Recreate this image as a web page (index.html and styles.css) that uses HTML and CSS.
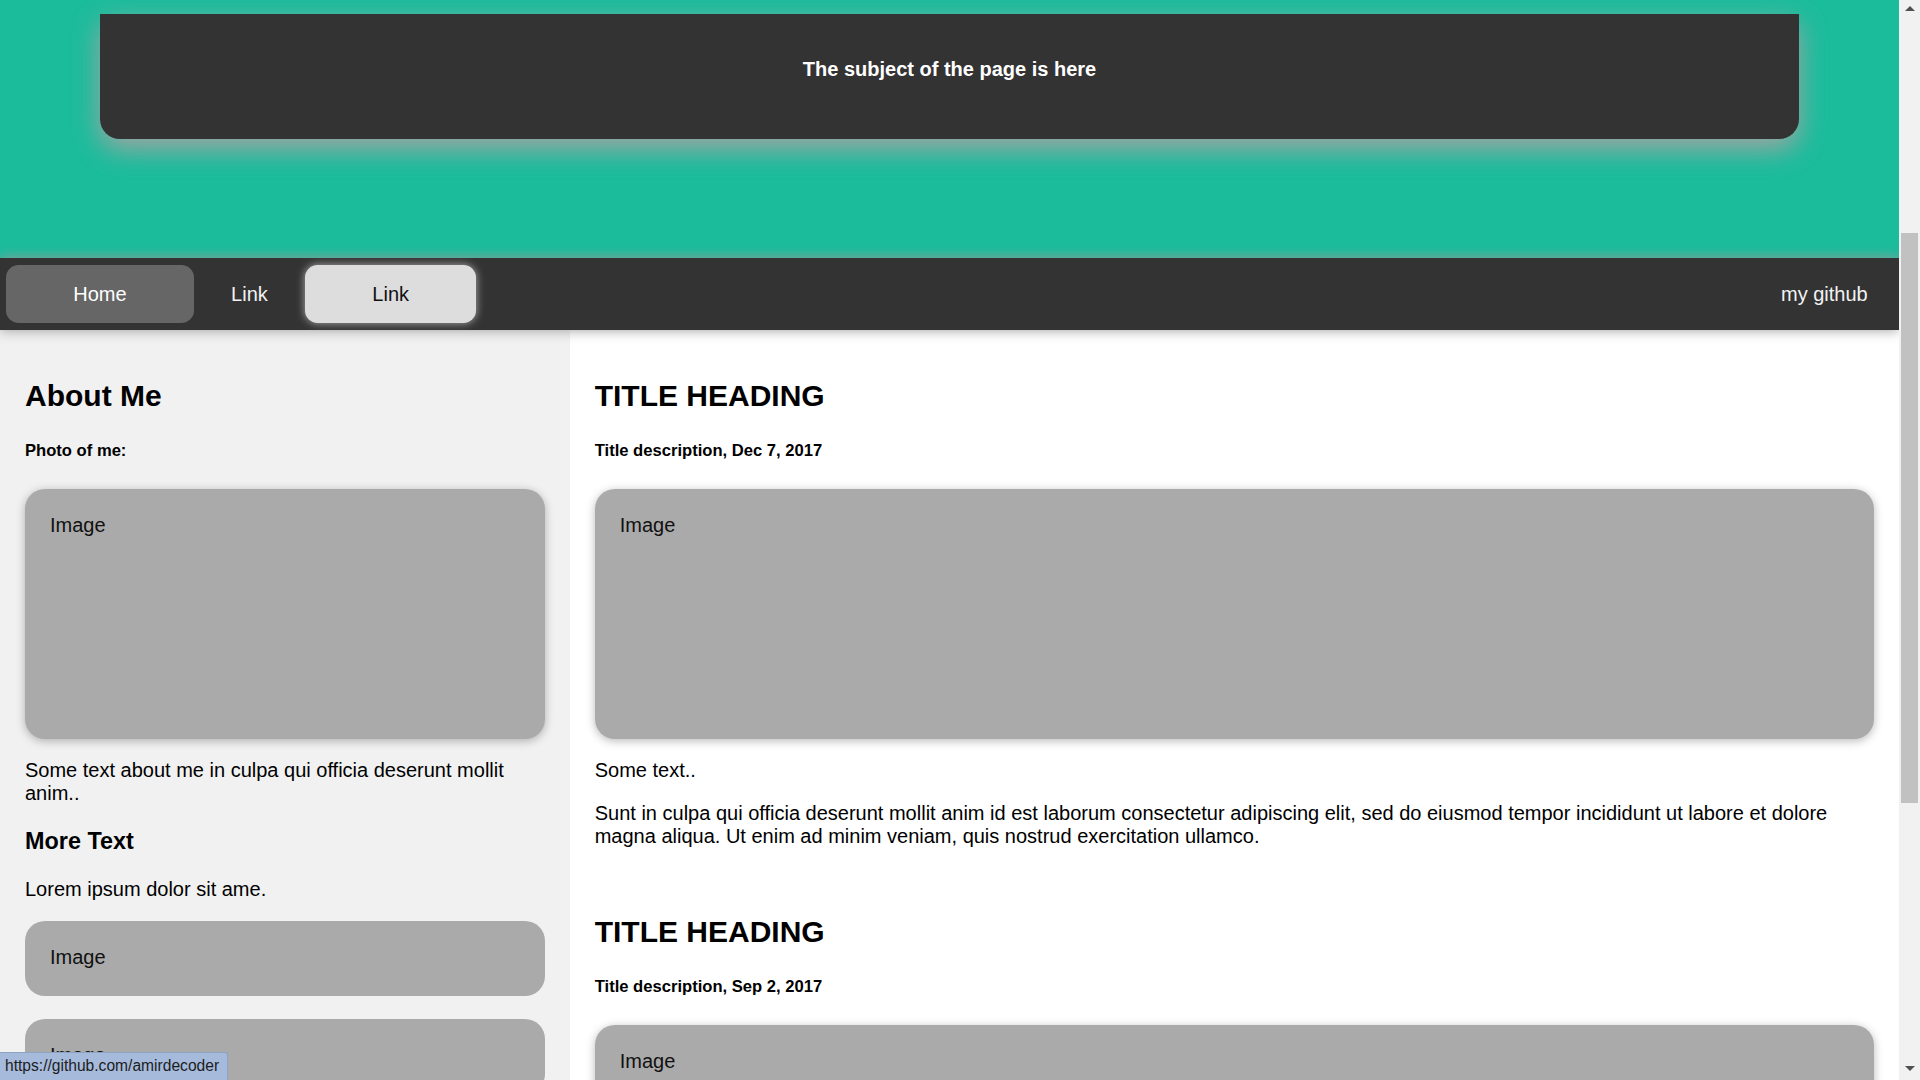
FILE: index.html
```html
<!DOCTYPE html>
<html lang="en">
<head>
<meta charset="utf-8">
<title>Page</title>
<link rel="stylesheet" href="styles.css">
</head>
<body>
<div class="page">
  <header class="header">
    <div class="header-card">The subject of the page is here</div>
  </header>
  <nav class="navbar">
    <a class="nav-item active" href="#">Home</a>
    <a class="nav-item" href="#">Link</a>
    <a class="nav-item hover" href="#">Link</a>
    <a class="nav-item right" href="https://github.com/amirdecoder">my github</a>
  </nav>
  <div class="row">
    <aside class="side">
      <h2>About Me</h2>
      <h5>Photo of me:</h5>
      <div class="fakeimg tall">Image</div>
      <p>Some text about me in culpa qui officia deserunt mollit anim..</p>
      <h3>More Text</h3>
      <p>Lorem ipsum dolor sit ame.</p>
      <div class="fakeimg small">Image</div>
      <div class="fakeimg small">Image</div>
      <div class="fakeimg small">Image</div>
    </aside>
    <main class="main">
      <article class="post">
        <h2>TITLE HEADING</h2>
        <h5>Title description, Dec 7, 2017</h5>
        <div class="fakeimg tall">Image</div>
        <p>Some text..</p>
        <p>Sunt in culpa qui officia deserunt mollit anim id est laborum consectetur adipiscing elit, sed do eiusmod tempor incididunt ut labore et dolore magna aliqua. Ut enim ad minim veniam, quis nostrud exercitation ullamco.</p>
      </article>
      <article class="post">
        <h2>TITLE HEADING</h2>
        <h5>Title description, Sep 2, 2017</h5>
        <div class="fakeimg tall">Image</div>
        <p>Some text..</p>
        <p>Sunt in culpa qui officia deserunt mollit anim id est laborum consectetur adipiscing elit, sed do eiusmod tempor incididunt ut labore et dolore magna aliqua. Ut enim ad minim veniam, quis nostrud exercitation ullamco.</p>
      </article>
    </main>
  </div>
</div>
<div class="scrollbar">
  <div class="sb-btn"><span class="arrow-up"></span></div>
  <div class="sb-thumb"></div>
  <div class="sb-fill"></div>
  <div class="sb-btn"><span class="arrow-down"></span></div>
</div>
<div class="statusbar">https://github.com/amirdecoder</div>
</body>
</html>
```
FILE: styles.css
```css
* {
  box-sizing: border-box;
}

html, body {
  height: 100%;
}

body {
  margin: 0;
  display: flex;
  overflow: hidden;
  font-family: "Liberation Sans", Arial, sans-serif;
  font-size: 20px;
  color: #000;
  background: #fff;
}

.page {
  flex: 1;
  min-width: 0;
  overflow: hidden;
}

/* header */
.header {
  background: #1abc9c;
  padding: 14px 100px 119px;
}

.header-card {
  background: #333;
  color: #fff;
  font-weight: bold;
  font-size: 20px;
  line-height: 23px;
  text-align: center;
  padding: 44px 0 58px;
  border-radius: 0 0 20px 20px;
  box-shadow: 0 10px 28px #a4a4a4;
}

/* navbar */
.navbar {
  position: relative;
  z-index: 1;
  display: flex;
  gap: 12.5px;
  padding: 6.75px 6.25px;
  background: #333;
  box-shadow: 0 0 12px #999;
}

.nav-item {
  display: block;
  color: #f2f2f2;
  text-decoration: none;
  font-size: 20px;
  line-height: 23px;
  padding: 18.5px 25px 16.5px;
  text-align: center;
  border-radius: 12.5px;
}

.nav-item.active {
  background: #666;
  color: #fff;
  padding: 18.5px 67px 16.5px;
}

.nav-item.hover {
  background: #ddd;
  color: #111;
  padding: 18.5px 67px 16.5px;
  box-shadow: 0 0 9px #b0b0b0;
}

.nav-item.right {
  margin-left: auto;
}

/* columns */
.row {
  display: flex;
}

.side {
  flex: 0 0 30%;
  background: #f1f1f1;
  padding: 25px;
}

.main {
  flex: 0 0 70%;
  background: #fff;
  padding: 25px;
}

h2 {
  font-size: 30px;
  line-height: 32px;
  margin: 25px 0 29.5px;
}

h3 {
  font-size: 23.4px;
  line-height: 27px;
  margin: 23.4px 0;
}

h5 {
  font-size: 16.6px;
  line-height: 19px;
  margin: 29.5px 0 28.5px;
}

p {
  margin: 20px 0;
  line-height: 23px;
}

.fakeimg {
  background: #aaa;
  color: #111;
  padding: 25px;
  line-height: 23px;
  border-radius: 20px;
}

.fakeimg.tall {
  height: 250px;
  box-shadow: 0 2px 10px rgba(0, 0, 0, 0.28);
}

.fakeimg.small {
  height: 75px;
}

.fakeimg.small + .fakeimg.small {
  margin-top: 23px;
}

.post + .post {
  padding-top: 23px;
}

/* fake window scrollbar */
.scrollbar {
  flex: 0 0 21px;
  background: #f1f1f1;
  display: flex;
  flex-direction: column;
  align-items: stretch;
}

.sb-btn {
  height: 17px;
  display: flex;
  align-items: center;
  justify-content: center;
}

.arrow-up {
  width: 0;
  height: 0;
  border-left: 5px solid transparent;
  border-right: 5px solid transparent;
  border-bottom: 5px solid #505050;
}

.arrow-down {
  width: 0;
  height: 0;
  border-left: 5px solid transparent;
  border-right: 5px solid transparent;
  border-top: 5px solid #505050;
  margin-top: -6px;
}

.sb-thumb {
  margin: 216px 2px 0;
  height: 570px;
  background: #c1c1c1;
}

.sb-fill {
  flex: 1;
}

/* browser status bubble */
.statusbar {
  position: fixed;
  left: 0;
  bottom: 0;
  height: 28px;
  width: 228px;
  padding: 3px 0 0 5px;
  background: #a6badb;
  border-top: 1px solid #8ea2c3;
  border-right: 1px solid #8ea2c3;
  border-top-right-radius: 3px;
  color: #1d1d1d;
  font-family: "Liberation Sans", Arial, sans-serif;
  font-size: 15.6px;
  line-height: 20px;
  white-space: nowrap;
}
```
